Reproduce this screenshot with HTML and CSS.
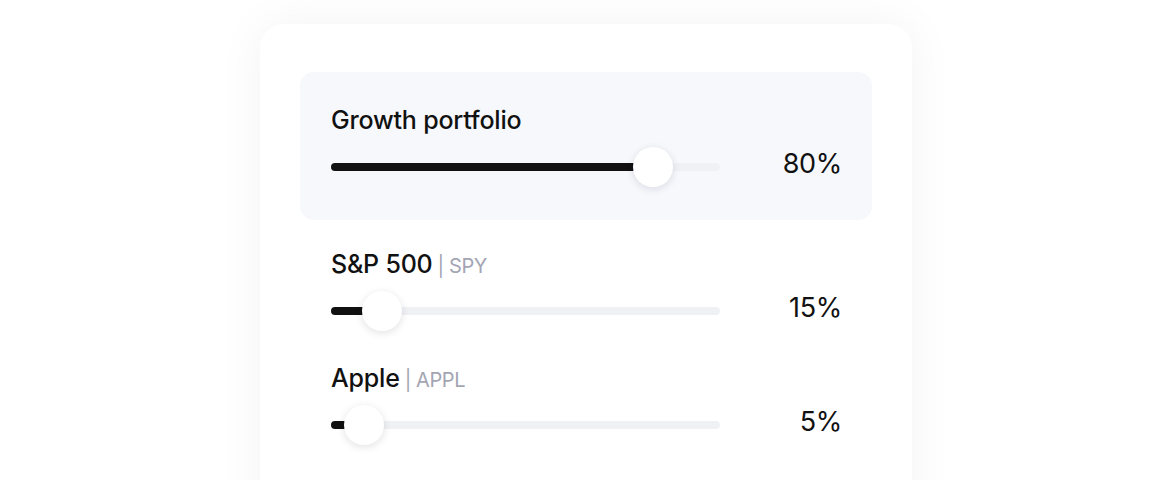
FILE: index.html
```html
<!DOCTYPE html>
<html>
<head>
<meta charset="utf-8">
<link rel="stylesheet" href="styles.css">
</head>
<body>
<div class="card">
  <div class="row panel">
    <div class="label"><span class="name">Growth portfolio</span></div>
    <div class="control">
      <div class="track">
        <div class="fill" style="width:322px"></div>
        <div class="thumb" style="left:322px"></div>
      </div>
      <div class="value">80%</div>
    </div>
  </div>
  <div class="row">
    <div class="label"><span class="name">S&amp;P 500</span><span class="ticker">| SPY</span></div>
    <div class="control">
      <div class="track">
        <div class="fill" style="width:51px"></div>
        <div class="thumb" style="left:51px"></div>
      </div>
      <div class="value">15%</div>
    </div>
  </div>
  <div class="row">
    <div class="label"><span class="name">Apple</span><span class="ticker">| APPL</span></div>
    <div class="control">
      <div class="track">
        <div class="fill" style="width:33px"></div>
        <div class="thumb" style="left:33px"></div>
      </div>
      <div class="value">5%</div>
    </div>
  </div>
</div>
</body>
</html>
```
FILE: styles.css
```css
* { box-sizing: border-box; }
html, body { margin: 0; padding: 0; background: #ffffff; }
body {
  font-family: Inter, "Noto Sans", sans-serif;
  color: #111111;
  display: flex;
  justify-content: center;
  padding-top: 24px;
  height: 480px;
  overflow: hidden;
}
.card {
  width: 652px;
  height: 600px;
  background: #ffffff;
  border-radius: 24px;
  box-shadow: 0 0 48px rgba(20, 20, 40, 0.05);
  padding: 48px 40px;
  display: flex;
  flex-direction: column;
  gap: 31px;
}
.row {
  padding: 0 30px 0 31px;
  display: flex;
  flex-direction: column;
  gap: 11px;
}
.panel {
  background: #f7f8fc;
  border-radius: 14px;
  padding-top: 32px;
  padding-bottom: 33px;
  margin-bottom: -3px;
}
.label {
  height: 32px;
  line-height: 32px;
  display: flex;
  align-items: baseline;
  gap: 5px;
}
.name {
  font-size: 25px;
  font-weight: 500;
  letter-spacing: -0.2px;
}
.ticker {
  font-size: 20px;
  color: #a3a5b3;
  letter-spacing: -0.4px;
}
.control {
  height: 40px;
  display: flex;
  align-items: center;
  justify-content: space-between;
}
.track {
  position: relative;
  width: 389px;
  height: 8px;
  border-radius: 4px;
  background: #f0f1f5;
}
.fill {
  height: 8px;
  border-radius: 4px;
  background: #111111;
}
.thumb {
  position: absolute;
  top: 50%;
  width: 40px;
  height: 40px;
  margin: -20px 0 0 -20px;
  border-radius: 50%;
  background: #ffffff;
  box-shadow: 0 2px 8px rgba(20, 20, 40, 0.12);
}
.value {
  font-size: 27px;
  font-weight: 400;
  letter-spacing: -0.3px;
  margin-top: -8px;
}
```
